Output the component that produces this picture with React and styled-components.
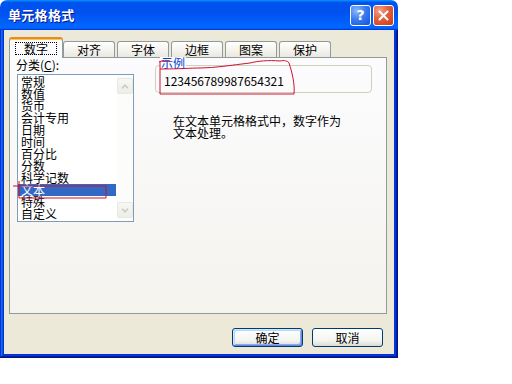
import React from "react";
import styled, { createGlobalStyle, css } from "styled-components";

const Global = createGlobalStyle`
  html, body { margin: 0; padding: 0; background: #ffffff; }
  body { width: 512px; height: 384px; overflow: hidden; font-family: "Noto Sans CJK SC", "DejaVu Sans", sans-serif; font-size: 12px; color: #000; }
`;

const cjk = `"Noto Sans CJK SC", "Liberation Sans", sans-serif`;

const Window = styled.div`
  position: relative;
  width: 398px;
  height: 357px;
  display: flex;
  flex-direction: column;
`;

const TitleBar = styled.div`
  height: 30px;
  flex: none;
  display: flex;
  align-items: center;
  padding: 0 4px 0 8px;
  border-radius: 7px 7px 0 0;
  background: linear-gradient(180deg, #0997ff, #0053ee 8%, #0050ee 40%, #0066ff 88%, #0066ff 93%, #005bff 95%, #003dd7 96%, #003dd7);
`;

const Title = styled.div`
  flex: 1;
  color: #fff;
  font-family: ${cjk};
  font-weight: 700;
  font-size: 13px;
  line-height: 14px;
  letter-spacing: 0.3px;
  text-shadow: 1px 1px #0f1089;
`;

const Caps = styled.div`
  display: flex;
  gap: 2px;
`;

const CapButton = styled.div`
  width: 19px;
  height: 19px;
  border: 1px solid #fff;
  border-radius: 3px;
  display: flex;
  align-items: center;
  justify-content: center;
  color: #fff;
  font-family: "DejaVu Sans", sans-serif;
  font-weight: 700;
  font-size: 14px;
  ${(p) =>
    p.$kind === "close"
      ? css`background: radial-gradient(circle at 30% 25%, #f2a48a 0%, #e2603e 45%, #c73a19 100%);`
      : css`background: radial-gradient(circle at 30% 25%, #8fb9fa 0%, #3a7df0 45%, #1650d8 100%);`}
`;

const Frame = styled.div`
  flex: 1;
  display: flex;
  background: #0831d9;
  padding: 0 4px 4px 4px;
  box-shadow: inset -1px -1px #00138c, inset 1px 0 #0831d9, inset -2px -2px #001ea0, inset 2px 0 #166aee, inset -3px -3px #003bda, inset 3px 0 #0855dd;
`;

const Client = styled.div`
  flex: 1;
  background: #ece9d8;
  display: flex;
  flex-direction: column;
  padding: 7px 7px 7px 5px;
`;

const TabStrip = styled.div`
  display: flex;
  align-items: flex-end;
  height: 20px;
  gap: 2px;
  position: relative;
  z-index: 2;
`;

const Tab = styled.div`
  width: 50px;
  height: 15px;
  border: 1px solid #919b9c;
  border-bottom: none;
  border-radius: 3px 3px 0 0;
  background: linear-gradient(180deg, #ffffff, #f3f2ed 60%, #e8e7e0);
  display: flex;
  align-items: center;
  justify-content: center;
  font-family: ${cjk};
  font-size: 12px;
  line-height: 12px;
  ${(p) =>
    p.$active &&
    css`
      width: 52px;
      margin-right: -2px;
      margin-bottom: -1px;
      background: #fcfcfe;
      border-top: 2px solid #e68b2c;
      box-shadow: inset 0 1px #ffc73c;
      height: 19px;
    `}
`;

const FocusLabel = styled.span`
  border: 1px dotted #000;
  padding: 0 8px;
  line-height: 11px;
`;

const Panel = styled.div`
  position: relative;
  z-index: 1;
  height: 254px;
  border: 1px solid #919b9c;
  background: linear-gradient(180deg, #fcfcfe, #f4f3ee);
  display: flex;
  padding: 1px 0 0 6px;
`;

const LeftCol = styled.div`
  width: 118px;
  display: flex;
  flex-direction: column;
`;

const FieldLabel = styled.div`
  font-family: ${cjk};
  font-size: 12px;
  line-height: 12px;
  height: 15px;
  u { text-decoration: underline; }
`;

const ListBox = styled.div`
  margin-left: 1px;
  width: 115px;
  height: 146px;
  border: 1px solid #7f9db9;
  background: #fff;
  display: flex;
`;

const Items = styled.div`
  width: 98px;
  padding-top: 1px;
`;

const Item = styled.div`
  height: 12px;
  line-height: 12px;
  padding-left: 3px;
  font-family: ${cjk};
  font-size: 12px;
  ${(p) =>
    p.$selected &&
    css`
      background: #316ac5;
      color: #fff;
    `}
`;

const Scrollbar = styled.div`
  width: 15px;
  margin-left: 1px;
  display: flex;
  flex-direction: column;
  justify-content: space-between;
  padding: 3px 0 3px;
  background: #fcfcfa;
`;

const ScrollBtn = styled.div`
  width: 14px;
  height: 14px;
  border: 1px solid #e8e7e1;
  border-radius: 2px;
  background: linear-gradient(180deg, #f7f7f3, #eeede7);
  display: flex;
  align-items: center;
  justify-content: center;
`;

const RightCol = styled.div`
  margin-left: 21px;
  padding-top: 6px;
  display: flex;
  flex-direction: column;
`;

const Group = styled.div`
  position: relative;
  box-sizing: border-box;
  width: 217px;
  height: 28px;
  border: 1px solid #d0d0bf;
  border-radius: 4px;
  padding-left: 8px;
  display: flex;
  align-items: center;
`;

const Legend = styled.div`
  position: absolute;
  left: 4px;
  top: -9px;
  padding: 0 1px;
  background: #fbfbfa;
  color: #0046d5;
  font-family: ${cjk};
  font-size: 12px;
  line-height: 12px;
`;

const Sample = styled.div`
  font-family: ${cjk};
  font-size: 12px;
  line-height: 12px;
  margin-top: 3px;
`;

const Desc = styled.div`
  margin: 22px 0 0 18px;
  font-family: ${cjk};
  font-size: 12px;
  line-height: 12px;
`;

const Footer = styled.div`
  display: flex;
  justify-content: flex-end;
  gap: 9px;
  padding: 14px 4px 0 0;
`;

const Button = styled.div`
  width: 69px;
  height: 17px;
  border: 1px solid #003c74;
  border-radius: 3px;
  background: linear-gradient(180deg, #ffffff, #f3f3ef 70%, #dcdad0);
  display: flex;
  align-items: center;
  justify-content: center;
  font-family: ${cjk};
  font-size: 12px;
  line-height: 12px;
  ${(p) =>
    p.$default &&
    css`
      box-shadow: inset 1px 1px #cee7ff, inset -1px -1px #6982ee, inset 2px 2px #bcd4f6, inset -2px -2px #89ade4;
    `}
`;

const Marks = styled.svg`
  position: absolute;
  left: 0;
  top: 0;
  pointer-events: none;
  z-index: 5;
`;

const tabs = ["数字", "对齐", "字体", "边框", "图案", "保护"];
const cats = ["常规", "数值", "货币", "会计专用", "日期", "时间", "百分比", "分数", "科学记数", "文本", "特殊", "自定义"];

const Chevron = ({ up }) => (
  <svg width="8" height="5" viewBox="0 0 8 5">
    <path d={up ? "M1 4.2 L4 1.2 L7 4.2" : "M1 0.8 L4 3.8 L7 0.8"} fill="none" stroke="#c9cbc3" strokeWidth="1.6" />
  </svg>
);

export default function App() {
  return (
    <>
      <Global />
      <Window>
        <TitleBar>
          <Title>单元格格式</Title>
          <Caps>
            <CapButton $kind="help">?</CapButton>
            <CapButton $kind="close">
              <svg width="11" height="11" viewBox="0 0 11 11">
                <path d="M1.5 1.5 L9.5 9.5 M9.5 1.5 L1.5 9.5" stroke="#fff" strokeWidth="2" strokeLinecap="round" />
              </svg>
            </CapButton>
          </Caps>
        </TitleBar>
        <Frame>
          <Client>
            <TabStrip>
              {tabs.map((t, i) => (
                <Tab key={t} $active={i === 0}>
                  {i === 0 ? <FocusLabel>{t}</FocusLabel> : t}
                </Tab>
              ))}
            </TabStrip>
            <Panel>
              <LeftCol>
                <FieldLabel>
                  分类(<u>C</u>):
                </FieldLabel>
                <ListBox>
                  <Items>
                    {cats.map((c) => (
                      <Item key={c} $selected={c === "文本"}>
                        {c}
                      </Item>
                    ))}
                  </Items>
                  <Scrollbar>
                    <ScrollBtn>
                      <Chevron up />
                    </ScrollBtn>
                    <ScrollBtn>
                      <Chevron />
                    </ScrollBtn>
                  </Scrollbar>
                </ListBox>
              </LeftCol>
              <RightCol>
                <Group>
                  <Legend>示例</Legend>
                  <Sample>123456789987654321</Sample>
                </Group>
                <Desc>
                  在文本单元格格式中，数字作为
                  <br />
                  文本处理。
                </Desc>
              </RightCol>
            </Panel>
            <Footer>
              <Button $default>确定</Button>
              <Button>取消</Button>
            </Footer>
          </Client>
        </Frame>
        <Marks width="398" height="357" viewBox="0 0 398 357">
          <g fill="none" stroke="#d0102e" strokeWidth="1">
            <path d="M160 61 L160 94 L294 94 C 295 84, 292 72, 289 63 C 288 61, 284 60, 280 61 C 268 60, 258 61, 250 63 C 232 65, 215 68, 200 68 C 190 68, 180 69, 160 69" />
            <path d="M159 62 C 163 60, 166 60, 170 61" />
            <path d="M13 186 L106 186 L106 198 L19 198 L19 181" />
          </g>
        </Marks>
      </Window>
    </>
  );
}
